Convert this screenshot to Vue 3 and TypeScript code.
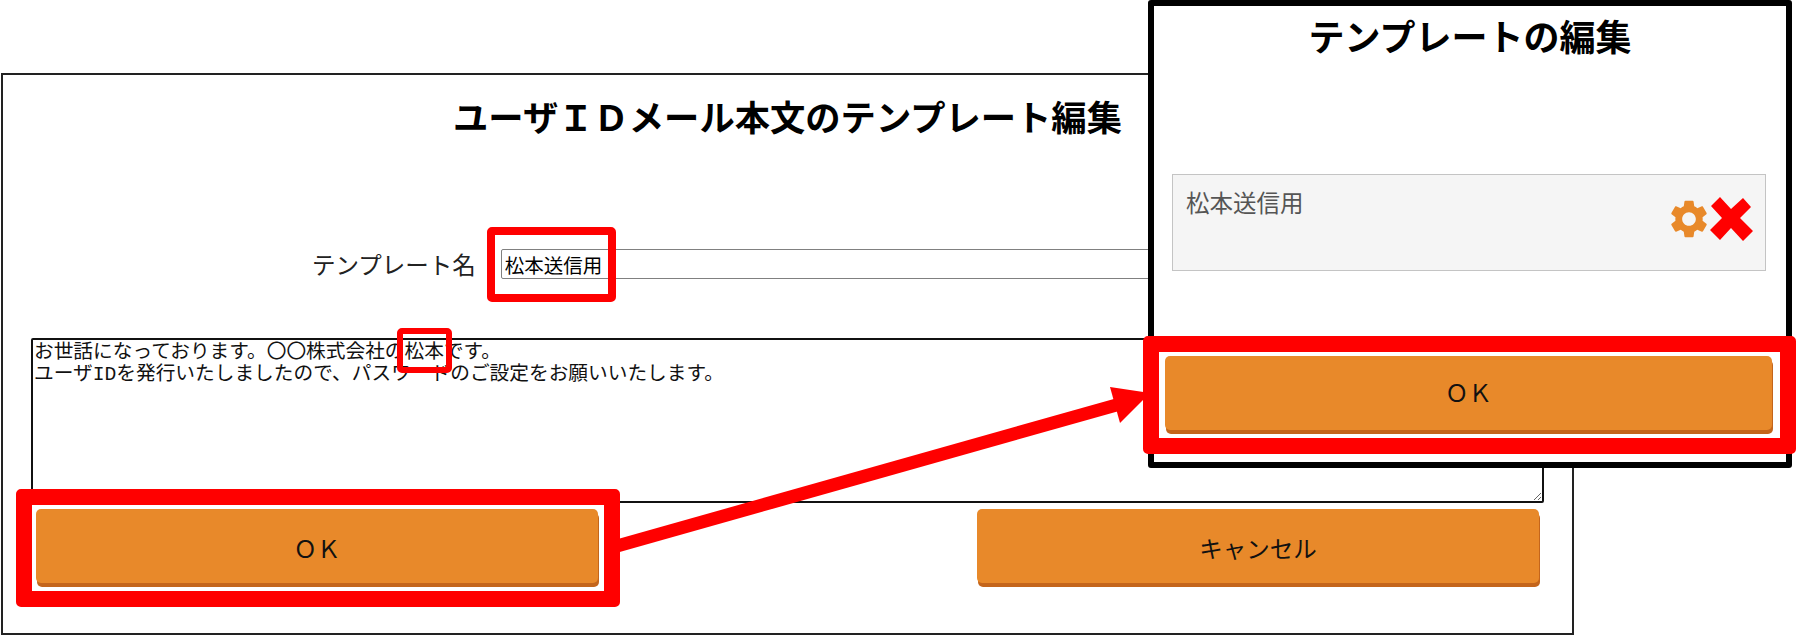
<template>
  <div class="canvas">
    <!-- back window: user id mail template -->
    <section class="window-main">
      <h1 class="main-title">ユーザＩＤメール本文のテンプレート編集</h1>
      <div class="name-row">
        <label class="name-label">テンプレート名</label>
        <input class="name-input" type="text" :value="templateName" />
      </div>
      <textarea class="body-input" :value="mailBody"></textarea>
      <div class="main-buttons">
        <button class="btn">ＯＫ</button>
        <button class="btn">キャンセル</button>
      </div>
    </section>

    <!-- front window: template list -->
    <section class="window-front">
      <h2 class="front-title">テンプレートの編集</h2>
      <div class="template-item">
        <span class="template-name">{{ templateName }}</span>
        <div class="template-icons">
          <svg class="icon-gear" viewBox="2.5 2 19 20">
            <path d="M19.14 12.94c.04-.3.06-.61.06-.94 0-.32-.02-.64-.07-.94l2.03-1.58c.18-.14.23-.41.12-.61l-1.92-3.32c-.12-.22-.37-.29-.59-.22l-2.39.96c-.5-.38-1.03-.7-1.62-.94l-.36-2.54c-.04-.24-.24-.41-.48-.41h-3.84c-.24 0-.43.17-.47.41l-.36 2.54c-.59.24-1.13.57-1.62.94l-2.39-.96c-.22-.08-.47 0-.59.22L2.74 8.87c-.12.21-.08.47.12.61l2.03 1.58c-.05.3-.07.62-.07.94s.02.64.06.94l-2.03 1.58c-.18.14-.23.41-.12.61l1.92 3.32c.12.22.37.29.59.22l2.39-.96c.5.38 1.03.7 1.62.94l.36 2.54c.05.24.24.41.48.41h3.84c.24 0 .44-.17.47-.41l.36-2.54c.59-.24 1.13-.56 1.62-.94l2.39.96c.22.08.47 0 .59-.22l1.92-3.32c.12-.22.07-.47-.12-.61l-2.01-1.58zM12 15.6c-1.98 0-3.6-1.62-3.6-3.6s1.62-3.6 3.6-3.6 3.6 1.62 3.6 3.6-1.62 3.6-3.6 3.6z" />
          </svg>
          <svg class="icon-close" viewBox="0 0 43 44">
            <path d="M10 0 L21 12 L33 1 L41 10 L30 21 L43 34 L33 44 L21 31 L10 43 L0 33 L12 21 L1 9 Z" />
          </svg>
        </div>
      </div>
      <button class="btn btn-front">ＯＫ</button>
    </section>

    <!-- red annotations on top of the screenshots -->
    <svg class="arrow" width="1798" height="636" viewBox="0 0 1798 636">
      <line x1="610" y1="548" x2="1120" y2="404" stroke="#f00" stroke-width="13" />
      <polygon points="1110,387 1120,423 1150,393" fill="#f00" />
    </svg>
    <div class="mark mark-input"></div>
    <div class="mark mark-name"></div>
    <div class="mark mark-ok"></div>
    <div class="mark mark-front-ok"></div>
  </div>
</template>

<script setup lang="ts">
const templateName = '松本送信用'
const mailBody =
  'お世話になっております。〇〇株式会社の松本です。\nユーザIDを発行いたしましたので、パスワードのご設定をお願いいたします。'
</script>

<style>
html,
body {
  margin: 0;
  background: #fff;
}
</style>

<style scoped>
.canvas {
  position: relative;
  width: 1798px;
  height: 636px;
  overflow: hidden;
  background: #fff;
  font-family: "Noto Sans CJK JP", sans-serif;
  color: #000;
}

.window-main {
  position: absolute;
  left: 1px;
  top: 73px;
  width: 1573px;
  height: 562px;
  box-sizing: border-box;
  border: 2px solid #222;
  padding: 0 28px;
}

.main-title {
  margin: 16px 0 0;
  font-size: 35.3px;
  line-height: 50px;
  font-weight: 700;
  text-align: center;
}

.name-row {
  display: flex;
  align-items: center;
  gap: 25px;
  margin: 108px 0 0 281px;
}

.name-label {
  font-size: 23.5px;
  line-height: 30px;
  color: #222;
}

.name-input {
  width: 1000px;
  height: 30px;
  box-sizing: border-box;
  border: 1px solid #808080;
  border-radius: 2px;
  padding: 0 3px;
  font-family: "Noto Sans CJK JP", sans-serif;
  font-size: 19.5px;
  color: #000;
}

.body-input {
  display: block;
  width: 1513px;
  height: 165px;
  box-sizing: border-box;
  margin: 59px 0 0;
  border: 2px solid #111;
  border-radius: 2px;
  padding: 2px 1px;
  font-family: "Liberation Mono", "Noto Sans CJK JP", monospace;
  font-size: 19.7px;
  line-height: 22px;
  color: #111;
}

.main-buttons {
  display: flex;
  justify-content: space-between;
  width: 1503px;
  margin: 6px 0 0 5px;
}

.btn {
  width: 562px;
  height: 74px;
  border: none;
  border-radius: 5px;
  background: #e8892a;
  box-shadow: 1px 4px 0 #c4651b;
  padding: 3px 0 0;
  font-family: "Noto Sans CJK JP", sans-serif;
  font-size: 23.5px;
  color: #111;
  cursor: pointer;
}

.window-front {
  position: absolute;
  left: 1148px;
  top: 0;
  width: 644px;
  height: 468px;
  box-sizing: border-box;
  border: 6px solid #000;
  border-radius: 3px;
  background: #fff;
  padding: 0 18px;
}

.front-title {
  margin: 3px 0 0;
  font-size: 36px;
  line-height: 52px;
  font-weight: 700;
  text-align: center;
}

.template-item {
  display: flex;
  justify-content: space-between;
  width: 594px;
  height: 97px;
  box-sizing: border-box;
  margin: 113px 0 0;
  border: 1px solid #c4c4c4;
  background: #f5f5f5;
  padding: 10px 12px 0 13px;
}

.template-name {
  font-size: 23.5px;
  line-height: 34px;
  color: #555;
}

.template-icons {
  display: flex;
  align-items: center;
  gap: 2px;
  height: 52px;
  margin-top: 8px;
}

.icon-gear {
  width: 38px;
  height: 38px;
  fill: #e8892a;
}

.icon-close {
  width: 43px;
  height: 44px;
  fill: #f00;
}

.btn-front {
  display: block;
  width: 607px;
  margin: 85px 0 0 -7px;
  padding: 0 0 3px;
}

.arrow {
  position: absolute;
  left: 0;
  top: 0;
  pointer-events: none;
}

.mark {
  position: absolute;
  box-sizing: border-box;
  border: 16px solid #f00;
  border-radius: 5px;
}

.mark-input {
  left: 487px;
  top: 227px;
  width: 129px;
  height: 75px;
  border-width: 8px;
}

.mark-name {
  left: 397px;
  top: 328px;
  width: 55px;
  height: 45px;
  border-width: 6px;
}

.mark-ok {
  left: 16px;
  top: 489px;
  width: 604px;
  height: 118px;
}

.mark-front-ok {
  left: 1143px;
  top: 336px;
  width: 653px;
  height: 118px;
}
</style>
